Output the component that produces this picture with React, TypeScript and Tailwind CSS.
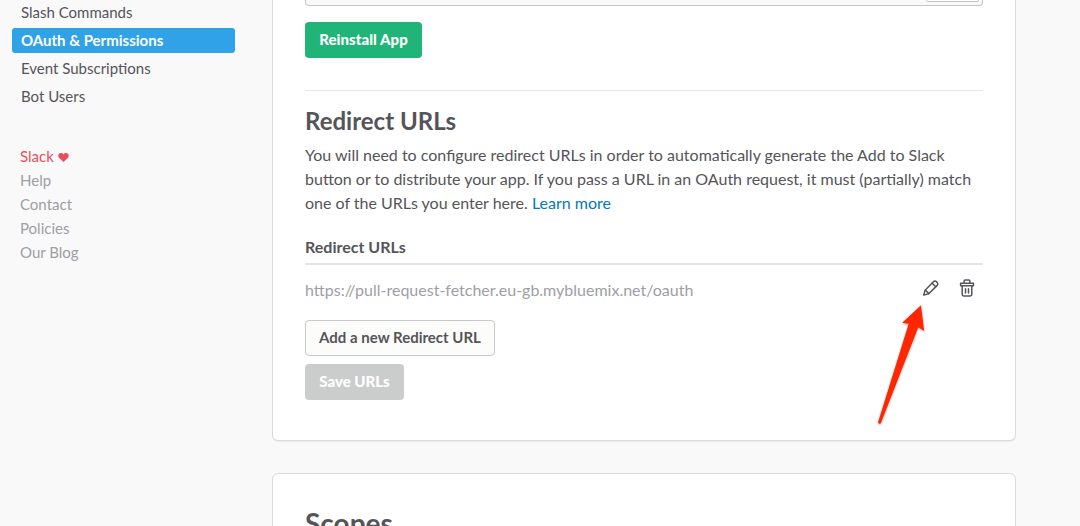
const navItems = [
  { label: "Slash Commands", active: false },
  { label: "OAuth & Permissions", active: true },
  { label: "Event Subscriptions", active: false },
  { label: "Bot Users", active: false },
];

const footerLinks = ["Help", "Contact", "Policies", "Our Blog"];

function Heart() {
  return (
    <svg className="mt-[2px] ml-1 h-[9px] w-[11px]" viewBox="0 0 11 9.5" fill="#eb4d5c">
      <path d="M5.5 9.5 1 5.2C-.3 3.9-.3 1.9.8.8 2-.3 4.2-.2 5.5 1.5 6.8-.2 9-.3 10.2.8c1.1 1.1 1.1 3.1-.2 4.4Z" />
    </svg>
  );
}

function PencilIcon() {
  return (
    <svg className="h-[18px] w-[18px]" viewBox="0 0 18 18" fill="none" stroke="#555459" strokeWidth="1.5" strokeLinejoin="round" strokeLinecap="round">
      <path d="M1.7 16.1 3.1 11.2 11.4 2.7C12.3 1.8 13.5 1.8 14.4 2.6L15.2 3.4C16 4.3 16 5.5 15.2 6.4L6.7 14.7Z" />
      <path d="M3.5 11.2 6.7 14.4M10.2 4.2 13.7 7.7" />
    </svg>
  );
}

function TrashIcon() {
  return (
    <svg className="h-[18px] w-[16px]" viewBox="0 0 16 18" fill="none" stroke="#555459" strokeWidth="1.5" strokeLinejoin="round" strokeLinecap="round">
      <path d="M1.6 4.2H14.4V6.7H1.6ZM5.1 4V2.2C5.1 1.4 5.5 1 6.2 1H9.8C10.5 1 10.9 1.4 10.9 2.2V4M3.2 7V15.3C3.2 16.4 3.7 16.9 4.7 16.9H11.3C12.3 16.9 12.8 16.4 12.8 15.3V7" />
      <path d="M6.5 9.7V13.9M9.5 9.7V13.9" />
    </svg>
  );
}

function Sidebar() {
  return (
    <aside className="w-[272px] shrink-0 pl-3 text-[15px]">
      <nav className="flex w-[223px] flex-col gap-[3px]">
        {navItems.map((item) => (
          <a
            key={item.label}
            className={
              item.active
                ? "h-[25px] rounded-[3px] bg-[#30a2e8] pl-[9px] leading-[25px] font-bold text-white"
                : "h-[25px] pl-[9px] leading-[25px] text-[#555459]"
            }
          >
            {item.label}
          </a>
        ))}
      </nav>
      <div className="mt-[35px] flex flex-col pl-2 leading-6 text-[#9e9ea6]">
        <a className="flex h-6 items-center text-[#eb4d5c]">
          Slack
          <Heart />
        </a>
        {footerLinks.map((label) => (
          <a key={label} className="h-6">
            {label}
          </a>
        ))}
      </div>
    </aside>
  );
}

function Arrow() {
  return (
    <svg
      className="absolute top-[300px] left-[872px] h-[132px] w-[60px] drop-shadow-[0_1px_1px_rgba(0,0,0,0.35)]"
      viewBox="0 0 60 132"
      fill="#ff2600"
    >
      <path d="M49 5.3 52.2 31 46.3 27.2 9 122.8Q7.5 125 6 122.5L36.7 23.7 30.2 22.7Z" />
    </svg>
  );
}

export default function App() {
  return (
    <div className="relative flex h-[526px] w-[1080px] overflow-hidden bg-[#f9f9f9] font-['Lato',sans-serif] text-[#555459]">
      <Sidebar />
      <main className="w-[744px] shrink-0">
        <section className="h-[441px] rounded-b-md border border-t-0 border-[#d9dadb] bg-white px-8 shadow-[0_1px_1px_rgba(0,0,0,0.06)]">
          <div className="flex h-[6px] justify-end rounded-b-[4px] border border-t-0 border-[#c5c5c5] bg-[#f9f9f9] pr-[3px]">
            <div className="h-[2px] w-[53px] rounded-b-[3px] border border-t-0 border-[#c5c5c5] bg-white" />
          </div>
          <button className="mt-4 block h-9 w-[117px] rounded-[4px] bg-[#20b478] pb-[2px] text-[15px] font-black tracking-[0.05px] text-white">
            Reinstall App
          </button>
          <hr className="mt-8 border-t border-[#e5e5e5]" />
          <h2 className="mt-[14px] h-8 text-2xl leading-8 font-bold">Redirect URLs</h2>
          <p className="mt-[6px] text-base leading-6 whitespace-nowrap">
            You will need to configure redirect URLs in order to automatically generate the Add to Slack
            <br />
            button or to distribute your app. If you pass a URL in an OAuth request, it must (partially) match
            <br />
            one of the URLs you enter here. <a className="text-[#007ab8]">Learn more</a>
          </p>
          <h3 className="mt-5 h-[30px] border-b-2 border-[#e5e5e5] text-base leading-6 font-bold">
            Redirect URLs
          </h3>
          <div className="mt-[13px] flex h-6 items-center">
            <span className="grow text-base leading-6 text-[#9e9ea6]">
              https://pull-request-fetcher.eu-gb.mybluemix.net/oauth
            </span>
            <div className="mb-1 flex items-center gap-[19px] pr-[8.5px]">
              <PencilIcon />
              <TrashIcon />
            </div>
          </div>
          <button className="mt-[18px] block h-9 w-[190px] rounded-[4px] border border-[#c7cacd] bg-[#fcfcfa] pb-[2px] text-[15px] font-bold">
            Add a new Redirect URL
          </button>
          <button className="mt-2 block h-9 w-[99px] rounded-[4px] bg-[#cbcdcc] pb-[2px] text-[15px] font-black text-white">
            Save URLs
          </button>
        </section>
        <section className="mt-8 h-[120px] rounded-md border border-[#d9dadb] bg-white px-8 pt-[31px]">
          <h2 className="text-[28px] leading-9 font-bold">Scopes</h2>
        </section>
      </main>
      <Arrow />
    </div>
  );
}
